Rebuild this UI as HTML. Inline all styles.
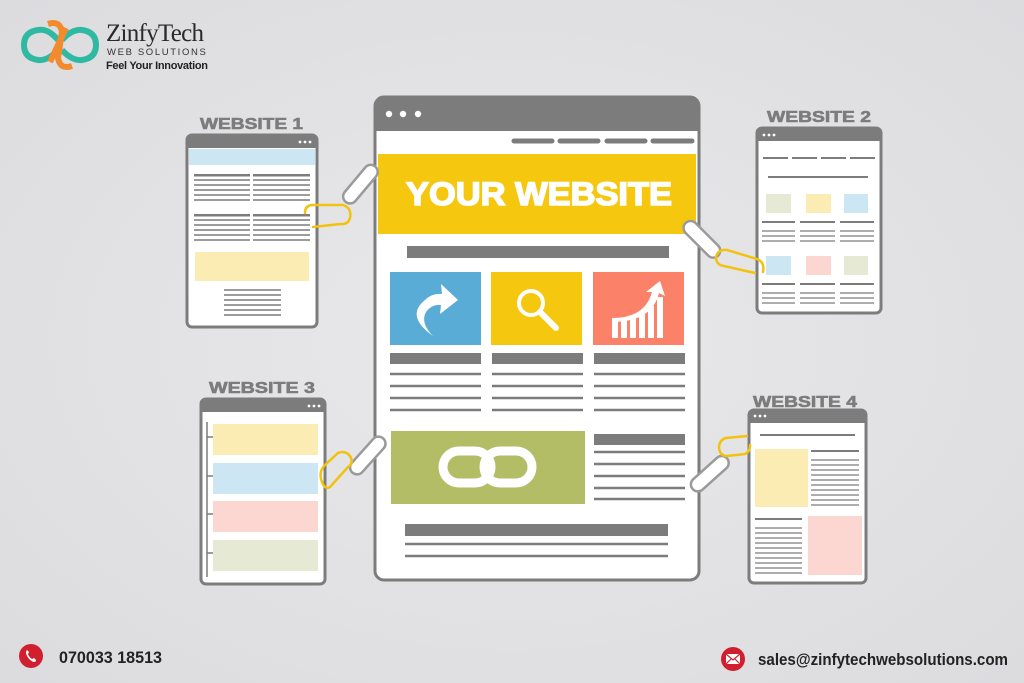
<!DOCTYPE html>
<html><head><meta charset="utf-8"><style>
html,body{margin:0;padding:0;}
body{width:1024px;height:683px;overflow:hidden;background:#e4e4e6;position:relative;font-family:"Liberation Sans",sans-serif;}
svg{position:absolute;left:0;top:0;}
</style></head><body>
<svg width="1024" height="683" viewBox="0 0 1024 683" xmlns="http://www.w3.org/2000/svg">
<defs>
<radialGradient id="bg" cx="50%" cy="50%" r="70%"><stop offset="0" stop-color="#e9e9eb"/><stop offset="1" stop-color="#dcdcdf"/></radialGradient>
</defs>
<rect width="1024" height="683" fill="url(#bg)"/>

<!-- logo -->
<g fill="none" stroke-width="6">
<path d="M58 40 Q48 28 38 30 Q24 32 24 45 Q24 58 38 60 Q48 61 58 50" stroke="#2fb9a3"/>
<path d="M62 50 Q72 61 82 60 Q96 58 96 45 Q96 32 82 30 Q72 29 62 40" stroke="#2fb9a3"/>
<path d="M48 24 Q60 20 62 32 L58 58 Q60 70 72 66" stroke="#f28a2e"/>
<path d="M50 62 L66 28" stroke="#f28a2e"/>
</g>
<text x="106" y="41" font-family="Liberation Serif,serif" font-size="25" fill="#2a2a2a" textLength="98">ZinfyTech</text>
<text x="107" y="55" font-size="9.5" letter-spacing="2.2" fill="#333" textLength="101">WEB SOLUTIONS</text>
<text x="106" y="69" font-size="11" font-weight="bold" fill="#222" textLength="102">Feel Your Innovation</text>

<!-- main browser -->
<rect x="375" y="97" width="324" height="483" rx="9" fill="#fff" stroke="#7c7c7c" stroke-width="3"/>
<path d="M375 131 V106 a9 9 0 0 1 9 -9 H690 a9 9 0 0 1 9 9 V131 Z" fill="#7c7c7c"/>
<circle cx="389" cy="114" r="3.2" fill="#fff"/><circle cx="403" cy="114" r="3.2" fill="#fff"/><circle cx="418" cy="114" r="3.2" fill="#fff"/>
<g stroke="#7c7c7c" stroke-width="5" stroke-linecap="round">
<line x1="514" y1="141" x2="552" y2="141"/><line x1="560" y1="141" x2="598" y2="141"/><line x1="607" y1="141" x2="645" y2="141"/><line x1="653" y1="141" x2="692" y2="141"/>
</g>
<rect x="378" y="154" width="318" height="80" fill="#f5c80f"/>
<text x="406" y="205" font-size="32" font-weight="bold" fill="#fff" stroke="#fff" stroke-width="1.5" textLength="266" lengthAdjust="spacingAndGlyphs">YOUR WEBSITE</text>
<rect x="407" y="246" width="262" height="12" fill="#7c7c7c"/>
<rect x="390" y="272" width="91" height="73" fill="#58acd6"/>
<rect x="491" y="272" width="91" height="73" fill="#f5c80f"/>
<rect x="593" y="272" width="91" height="73" fill="#fb8269"/>
<path d="M433 336 Q405 316 425 300 Q432 293 442 294 L441 284 L458 300 L440 314 L441 305 Q432 304 426 312 Q420 323 433 336 Z" fill="#fff"/>
<circle cx="531" cy="303" r="12" fill="none" stroke="#fff" stroke-width="4"/>
<line x1="540" y1="312" x2="556" y2="328" stroke="#fff" stroke-width="6" stroke-linecap="round"/>
<g fill="#fff"><rect x="612" y="321" width="6" height="17"/><rect x="621" y="320" width="6" height="18"/><rect x="630" y="318" width="6" height="20"/><rect x="639" y="314" width="6" height="24"/><rect x="648" y="306" width="6" height="32"/><rect x="657" y="297" width="6" height="41"/></g>
<path d="M612 318 Q645 318 652 292 L646 292 L660 281 L665 296 L659 293 Q652 322 612 322 Z" fill="#fff"/>
<g fill="#7c7c7c">
<rect x="390" y="353" width="91" height="11"/><rect x="492" y="353" width="91" height="11"/><rect x="594" y="353" width="91" height="11"/>
</g>
<g stroke="#7c7c7c" stroke-width="2.5">
<path d="M390 374H481M390 386H481M390 398H481M390 410H481M492 374H583M492 386H583M492 398H583M492 410H583M594 374H685M594 386H685M594 398H685M594 410H685"/>
<path d="M594 452H685M594 464H685M594 476H685M594 488H685M594 499H685"/>
<path d="M405 544H668M405 556H668"/>
</g>
<rect x="594" y="434" width="91" height="11" fill="#7c7c7c"/>
<rect x="405" y="524" width="263" height="12" fill="#7c7c7c"/>
<rect x="391" y="431" width="194" height="73" fill="#b2bd66"/>
<g fill="none" stroke="#fff" stroke-width="9">
<rect x="443" y="451" width="48" height="32" rx="16"/>
<rect x="484" y="451" width="48" height="32" rx="16"/>
</g>

<!-- labels -->
<g font-size="16" font-weight="bold" fill="#7c7c7c" stroke="#7c7c7c" stroke-width="0.6">
<text x="200" y="129" textLength="103" lengthAdjust="spacingAndGlyphs">WEBSITE 1</text>
<text x="767" y="122" textLength="104" lengthAdjust="spacingAndGlyphs">WEBSITE 2</text>
<text x="209" y="393" textLength="106" lengthAdjust="spacingAndGlyphs">WEBSITE 3</text>
<text x="753" y="407" textLength="104" lengthAdjust="spacingAndGlyphs">WEBSITE 4</text>
</g>

<!-- website 1 -->
<rect x="187" y="135" width="130" height="192" rx="5" fill="#fff" stroke="#7c7c7c" stroke-width="3"/>
<path d="M187 148V140a5 5 0 0 1 5-5H312a5 5 0 0 1 5 5V148Z" fill="#7c7c7c"/>
<g fill="#fff"><circle cx="300" cy="142" r="1.4"/><circle cx="305" cy="142" r="1.4"/><circle cx="310" cy="142" r="1.4"/></g>
<rect x="189" y="149" width="126" height="16" fill="#cde6f3"/>
<g stroke="#7c7c7c" stroke-width="1.5">
<path d="M194 175H250M253 175H310M194 180H250M253 180H310M194 185H250M253 185H310M194 190H250M253 190H310M194 195H250M253 195H310M194 200H250M253 200H310"/>
<path d="M194 215H250M253 215H310M194 220H250M253 220H310M194 225H250M253 225H310M194 230H250M253 230H310M194 235H250M253 235H310M194 240H250M253 240H310"/>
<path d="M224 290H281M224 295H281M224 300H281M224 305H281M224 310H281M224 315H281"/>
</g>
<rect x="194" y="174" width="56" height="2.5" fill="#7c7c7c"/><rect x="253" y="174" width="57" height="2.5" fill="#7c7c7c"/>
<rect x="194" y="214" width="56" height="2.5" fill="#7c7c7c"/><rect x="253" y="214" width="57" height="2.5" fill="#7c7c7c"/>
<rect x="195" y="252" width="114" height="29" fill="#fbecb4"/>

<!-- website 2 -->
<rect x="757" y="128" width="124" height="185" rx="5" fill="#fff" stroke="#7c7c7c" stroke-width="3"/>
<path d="M757 141V133a5 5 0 0 1 5-5H876a5 5 0 0 1 5 5V141Z" fill="#7c7c7c"/>
<g fill="#fff"><circle cx="764" cy="135" r="1.4"/><circle cx="769" cy="135" r="1.4"/><circle cx="774" cy="135" r="1.4"/></g>
<g stroke="#7c7c7c" stroke-width="2">
<path d="M763 158H788M792 158H817M821 158H846M850 158H875M768 177H868"/>
<path d="M762 222H795M800 222H835M840 222H874M762 284H795M800 284H835M840 284H874"/>
</g>
<g stroke="#7c7c7c" stroke-width="1.2">
<path d="M762 231H795M800 231H835M840 231H874M762 236H795M800 236H835M840 236H874M762 241H795M800 241H835M840 241H874"/>
<path d="M762 293H795M800 293H835M840 293H874M762 298H795M800 298H835M840 298H874M762 303H795M800 303H835M840 303H874"/>
</g>
<rect x="766" y="194" width="25" height="19" fill="#e6e9d3"/><rect x="806" y="194" width="25" height="19" fill="#fbecb4"/><rect x="844" y="194" width="24" height="19" fill="#cde6f3"/>
<rect x="766" y="256" width="25" height="19" fill="#cde6f3"/><rect x="806" y="256" width="25" height="19" fill="#fcd6d0"/><rect x="844" y="256" width="24" height="19" fill="#e6e9d3"/>

<!-- website 3 -->
<rect x="201" y="399" width="124" height="185" rx="5" fill="#fff" stroke="#7c7c7c" stroke-width="3"/>
<path d="M201 412V404a5 5 0 0 1 5-5H320a5 5 0 0 1 5 5V412Z" fill="#7c7c7c"/>
<g fill="#fff"><circle cx="309" cy="406" r="1.4"/><circle cx="314" cy="406" r="1.4"/><circle cx="319" cy="406" r="1.4"/></g>
<path d="M207 422V577M207 437H213M207 476H213M207 514H213M207 553H213" stroke="#7c7c7c" stroke-width="1.5"/>
<rect x="213" y="424" width="105" height="31" fill="#fbecb4"/>
<rect x="213" y="463" width="105" height="31" fill="#cde6f3"/>
<rect x="213" y="501" width="105" height="31" fill="#fcd6d0"/>
<rect x="213" y="540" width="105" height="31" fill="#e6e9d3"/>

<!-- website 4 -->
<rect x="749" y="410" width="117" height="173" rx="5" fill="#fff" stroke="#7c7c7c" stroke-width="3"/>
<path d="M749 423V415a5 5 0 0 1 5-5H861a5 5 0 0 1 5 5V423Z" fill="#7c7c7c"/>
<g fill="#fff"><circle cx="755" cy="416" r="1.4"/><circle cx="760" cy="416" r="1.4"/><circle cx="765" cy="416" r="1.4"/></g>
<path d="M760 435H855" stroke="#7c7c7c" stroke-width="2"/>
<rect x="755" y="449" width="53" height="58" fill="#fbecb4"/>
<rect x="808" y="516" width="54" height="59" fill="#fcd6d0"/>
<path d="M811 451H859M755 519H802" stroke="#7c7c7c" stroke-width="2"/>
<g stroke="#7c7c7c" stroke-width="1.2">
<path d="M811 460H859M811 465H859M811 470H859M811 475H859M811 480H859M811 485H859M811 490H859M811 495H859M811 500H859M811 505H859"/>
<path d="M755 528H802M755 533H802M755 538H802M755 543H802M755 548H802M755 553H802M755 558H802M755 563H802M755 568H802M755 573H802"/>
</g>

<!-- paper clips -->
<g fill="none" stroke-width="2.5" stroke-linecap="round">
<rect x="-8" y="-6" width="46" height="14" rx="7" transform="translate(350 195) rotate(-50)" stroke="#9a9a9a" fill="#fff"/>
<path d="M305 213 Q305 205 313 205 L343 205 Q352 208 350 218 Q348 225 340 224 L313 227" stroke="#f2c20f"/>
<rect x="-8" y="-6" width="46" height="14" rx="7" transform="translate(692 228) rotate(45)" stroke="#9a9a9a" fill="#fff"/>
<path d="M763 272 Q765 262 757 259 L727 250 Q718 249 716 257 Q716 265 724 266 L755 273" stroke="#f2c20f"/>
<rect x="-8" y="-6" width="46" height="14" rx="7" transform="translate(357 466) rotate(-48)" stroke="#9a9a9a" fill="#fff"/>
<path d="M322 482 Q318 472 325 465 L338 453 Q345 450 350 456 Q354 463 348 467 L330 487 Q325 490 322 482" stroke="#f2c20f"/>
<rect x="-8" y="-6" width="46" height="14" rx="7" transform="translate(698 483) rotate(-42)" stroke="#9a9a9a" fill="#fff"/>
<path d="M747 436 L726 438 Q719 440 719 448 Q720 456 727 456 L745 454 Q750 452 750 445" stroke="#f2c20f"/>
</g>

<!-- footer -->
<circle cx="31" cy="656" r="12" fill="#d01f2e"/>
<path d="M27 650 Q25 652 27 656 Q30 661 34 662 Q36 662 36 660 L34 658 L32 659 Q29 657 28 654 L29 652 Z" fill="#fff"/>
<text x="59" y="663" font-size="17" font-weight="bold" fill="#222" textLength="103" lengthAdjust="spacingAndGlyphs">070033 18513</text>
<circle cx="733" cy="659" r="12" fill="#d01f2e"/>
<rect x="726" y="654" width="14" height="10" fill="#fff"/>
<path d="M726 654 L733 660 L740 654 M726 664 L731 659 M740 664 L735 659" stroke="#d01f2e" stroke-width="1.2" fill="none"/>
<text x="758" y="665" font-size="17" font-weight="bold" fill="#222" textLength="250" lengthAdjust="spacingAndGlyphs">sales@zinfytechwebsolutions.com</text>
</svg>
</body></html>
